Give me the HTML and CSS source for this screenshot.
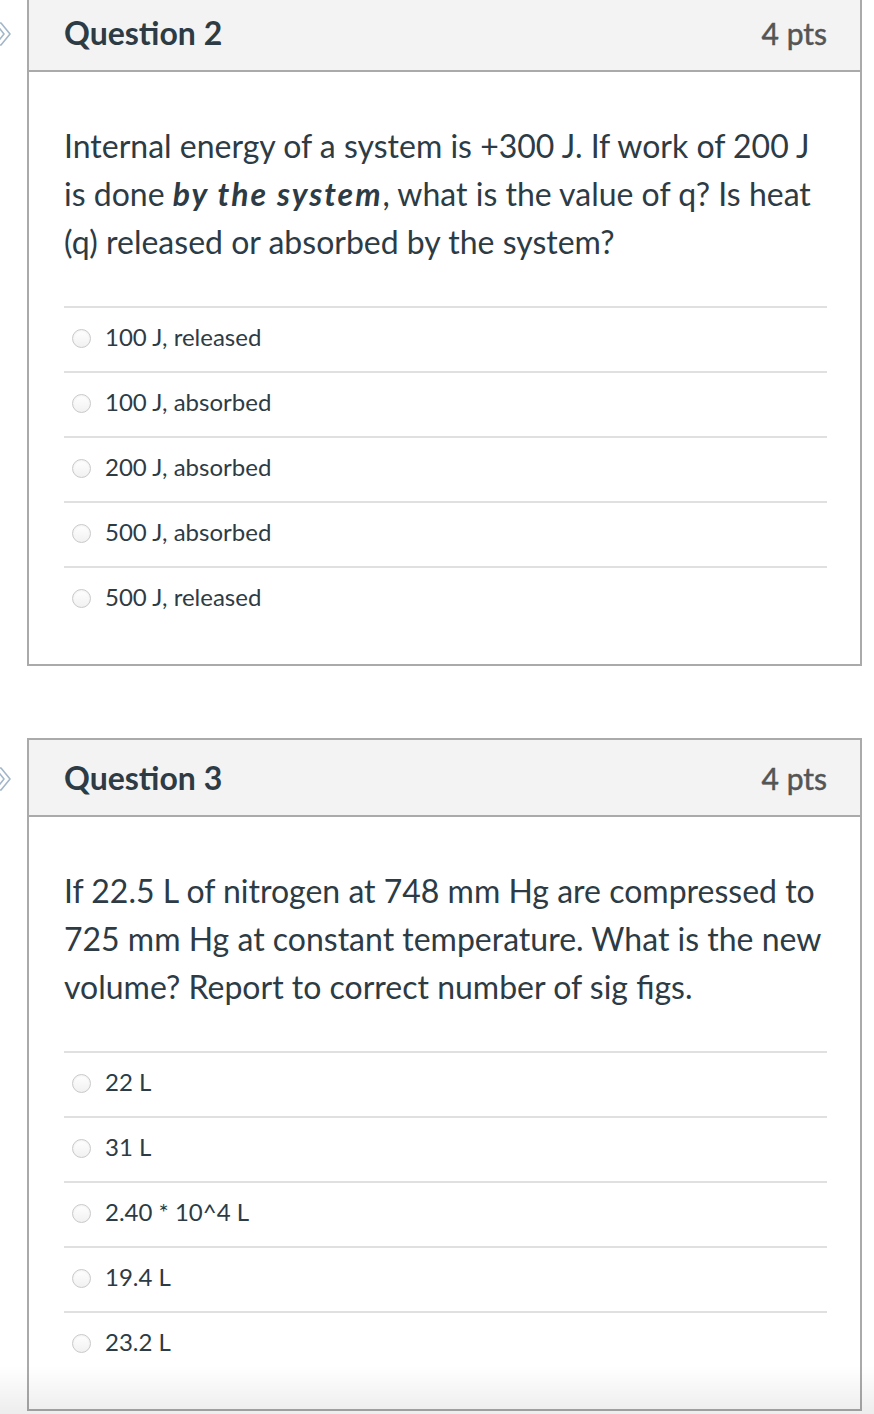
FILE: index.html
```html
<!DOCTYPE html>
<html lang="en">
<head>
<meta charset="utf-8">
<title>Quiz</title>
<link rel="stylesheet" href="styles.css">
</head>
<body>
<div class="page">
  <div class="question first">
    <div class="gutter">
      <svg class="flag" width="14" height="24" viewBox="0 0 14 24"><path d="M-5 1 L1 1 L10 12 L1 23 L-5 23 L4 12 Z" fill="#fff" stroke="#a3b6c9" stroke-width="1.6" stroke-linejoin="round"/></svg>
    </div>
    <div class="card">
      <div class="card-header">
        <span class="title">Question 2</span>
        <span class="pts">4 pts</span>
      </div>
      <div class="card-body">
        <p class="text">Internal energy of a system is +300 J. If work of 200 J is done <strong><em>by the system</em></strong>, what is the value of q? Is heat (q) released or absorbed by the system?</p>
        <ul class="answers">
          <li class="answer"><span class="radio"></span><span class="label">100 J, released</span></li>
          <li class="answer"><span class="radio"></span><span class="label">100 J, absorbed</span></li>
          <li class="answer"><span class="radio"></span><span class="label">200 J, absorbed</span></li>
          <li class="answer"><span class="radio"></span><span class="label">500 J, absorbed</span></li>
          <li class="answer"><span class="radio"></span><span class="label">500 J, released</span></li>
        </ul>
      </div>
    </div>
  </div>

  <div class="question">
    <div class="gutter">
      <svg class="flag" width="14" height="24" viewBox="0 0 14 24"><path d="M-5 1 L1 1 L10 12 L1 23 L-5 23 L4 12 Z" fill="#fff" stroke="#a3b6c9" stroke-width="1.6" stroke-linejoin="round"/></svg>
    </div>
    <div class="card">
      <div class="card-header">
        <span class="title">Question 3</span>
        <span class="pts">4 pts</span>
      </div>
      <div class="card-body">
        <p class="text">If 22.5 L of nitrogen at 748 mm Hg are compressed to 725 mm Hg at constant temperature. What is the new volume? Report to correct number of sig figs.</p>
        <ul class="answers">
          <li class="answer"><span class="radio"></span><span class="label">22 L</span></li>
          <li class="answer"><span class="radio"></span><span class="label">31 L</span></li>
          <li class="answer"><span class="radio"></span><span class="label">2.40 * 10^4 L</span></li>
          <li class="answer"><span class="radio"></span><span class="label">19.4 L</span></li>
          <li class="answer"><span class="radio"></span><span class="label">23.2 L</span></li>
        </ul>
      </div>
    </div>
  </div>
</div>
<div class="fade"></div>
</body>
</html>
```

FILE: styles.css
```css
html, body {
  margin: 0;
  padding: 0;
  background: #fff;
}

body {
  font-family: Lato, "Noto Sans", "Liberation Sans", sans-serif;
  color: #2d3b45;
  overflow: hidden;
}

.page {
  display: flex;
  flex-direction: column;
  gap: 72px;
  padding-right: 12px;
}

.question {
  display: flex;
  align-items: flex-start;
}

.question.first {
  margin-top: -7px;
}

.gutter {
  width: 27px;
  flex: 0 0 27px;
  padding-top: 29px;
  display: flex;
}

.flag {
  display: block;
}

.card {
  flex: 1;
  border: 2px solid #aaaaaa;
  background: #fff;
}

.card-header {
  height: 77px;
  box-sizing: border-box;
  background: #f3f3f3;
  border-bottom: 2px solid #aaaaaa;
  display: flex;
  align-items: center;
  justify-content: space-between;
  padding: 0 33px 0 35px;
}

.title {
  font-size: 32px;
  font-weight: 700;
  color: #2d3b45;
}

.pts {
  font-size: 30px;
  font-weight: 400;
  color: #555;
  -webkit-text-stroke: 0.5px #555;
}

.card-body {
  padding: 50px 33px 33px 35px;
}

.text {
  margin: 0 0 40px;
  font-size: 32px;
  line-height: 48px;
}

.text strong em {
  font-weight: 700;
  font-style: italic;
  letter-spacing: 2px;
}

.answers {
  list-style: none;
  margin: 0;
  padding: 0;
}

.answer {
  height: 65px;
  box-sizing: border-box;
  border-top: 2px solid #e0e0e0;
  display: flex;
  align-items: center;
  padding-left: 8px;
  padding-bottom: 6px;
}

.radio {
  width: 19px;
  height: 19px;
  box-sizing: border-box;
  border-radius: 50%;
  border: 1px solid #c9c9c9;
  background: linear-gradient(#ffffff, #f1f1f1);
  box-shadow: inset 0 1px 2px rgba(0,0,0,0.06);
  margin-right: 14px;
  margin-top: 3px;
  flex: 0 0 auto;
}

.label {
  font-size: 24px;
  color: #2d3b45;
}

.fade {
  position: fixed;
  left: 0;
  right: 0;
  bottom: 0;
  height: 48px;
  background: linear-gradient(rgba(0,0,0,0), rgba(0,0,0,0.07));
  pointer-events: none;
}
```
